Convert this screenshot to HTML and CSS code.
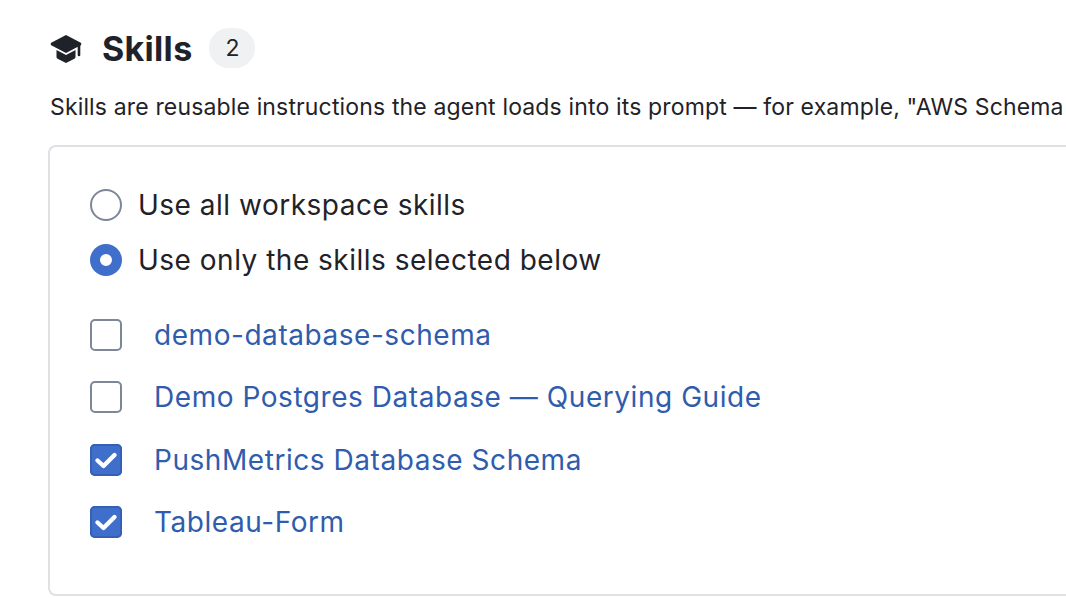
FILE: index.html
```html
<!DOCTYPE html>
<html lang="en">
<head>
    <meta charset="UTF-8">
    <title>Skills</title>
    <link rel="stylesheet" href="styles.css">
</head>
<body>
    <div class="page">
        <!-- header -->
        <div class="heading">
            <svg class="capIcon" viewBox="0 0 32 32" width="32" height="32">
                <path d="M16 3 L30.8 10.8 C31.5 11.4 31.5 12.6 30.8 13.2 L16 21 L1.2 13.2 C0.5 12.6 0.5 11.4 1.2 10.8 Z" fill="#1f2229"/>
                <path d="M6.5 18 L16 23 L25.5 18 V25 C25.5 25.8 25.1 26.4 24.4 26.8 L16 31 L7.6 26.8 C6.9 26.4 6.5 25.8 6.5 25 Z" fill="#1f2229"/>
                <path d="M29 13 V23" stroke="#1f2229" stroke-width="2.6" stroke-linecap="round"/>
            </svg>
            <h2>Skills</h2>
            <span class="count">2</span>
        </div>
        <p class="intro">Skills are reusable instructions the agent loads into its prompt — for example, "AWS Schema</p>

        <!-- skill selection -->
        <div class="card">
            <div class="radios">
                <label class="option"><span class="radio"></span>Use all workspace skills</label>
                <label class="option"><span class="radio on"></span>Use only the skills selected below</label>
            </div>
            <ul class="skills">
                <li><span class="check"></span><a href="#">demo-database-schema</a></li>
                <li><span class="check"></span><a href="#">Demo Postgres Database — Querying Guide</a></li>
                <li><span class="check on"><svg viewBox="0 0 32 32" width="32" height="32"><path d="M7.5 16.5 L13.5 22 L24.5 11" fill="none" stroke="#fff" stroke-width="4.4" stroke-linecap="round" stroke-linejoin="round"/></svg></span><a href="#">PushMetrics Database Schema</a></li>
                <li><span class="check on"><svg viewBox="0 0 32 32" width="32" height="32"><path d="M7.5 16.5 L13.5 22 L24.5 11" fill="none" stroke="#fff" stroke-width="4.4" stroke-linecap="round" stroke-linejoin="round"/></svg></span><a href="#">Tableau-Form</a></li>
            </ul>
        </div>
    </div>
</body>
</html>
```
FILE: styles.css
```css
html, body {
    margin: 0;
    height: 598px;
    overflow: hidden;
    background: #fff;
}

body {
    font-family: "Inter", "Noto Sans", sans-serif;
    color: #1f2229;
}

.page {
    padding: 28px 0 0 48px;
}

.heading {
    display: flex;
    align-items: center;
    height: 40px;
    margin-left: 2px;
}

.capIcon {
    margin-right: 20px;
}

.heading h2 {
    margin: 0;
    font-size: 34px;
    font-weight: 700;
    letter-spacing: 0.3px;
}

.count {
    width: 46px;
    height: 40px;
    margin-left: 17px;
    border-radius: 20px;
    background: #f0f1f3;
    font-size: 23px;
    line-height: 40px;
    text-align: center;
}

.intro {
    margin: 23px 0 0 2px;
    font-size: 23px;
    line-height: 32px;
    letter-spacing: 0.15px;
    white-space: nowrap;
}

.card {
    height: 451px;
    margin-top: 22px;
    padding: 42px 0 0 40px;
    box-sizing: border-box;
    border: 2px solid #dfe1e4;
    border-right: 0;
    border-radius: 8px 0 0 8px;
}

.radios {
    display: flex;
    flex-direction: column;
    gap: 23px;
}

.option {
    display: flex;
    align-items: center;
    gap: 16px;
    height: 32px;
    font-size: 28px;
    letter-spacing: 0.5px;
}

.radio {
    width: 32px;
    height: 32px;
    box-sizing: border-box;
    border: 2px solid #7c8798;
    border-radius: 50%;
}

.radio.on {
    border: 10px solid #3f6fcb;
    background: #fff;
}

.skills {
    list-style: none;
    margin: 43px 0 0;
    padding: 0;
    display: flex;
    flex-direction: column;
    gap: 30.3px;
}

.skills li {
    display: flex;
    align-items: center;
    gap: 32px;
    height: 32px;
    font-size: 28px;
    letter-spacing: 0.55px;
}

.skills a {
    color: #2f5cad;
    text-decoration: none;
}

.check {
    width: 32px;
    height: 32px;
    box-sizing: border-box;
    border: 2px solid #7c8798;
    border-radius: 5px;
    overflow: hidden;
}

.check.on {
    border: 0;
    background: #3f6fcb;
    box-shadow: inset 0 0 0 2px #3560b5;
}

.check svg {
    display: block;
}
```
